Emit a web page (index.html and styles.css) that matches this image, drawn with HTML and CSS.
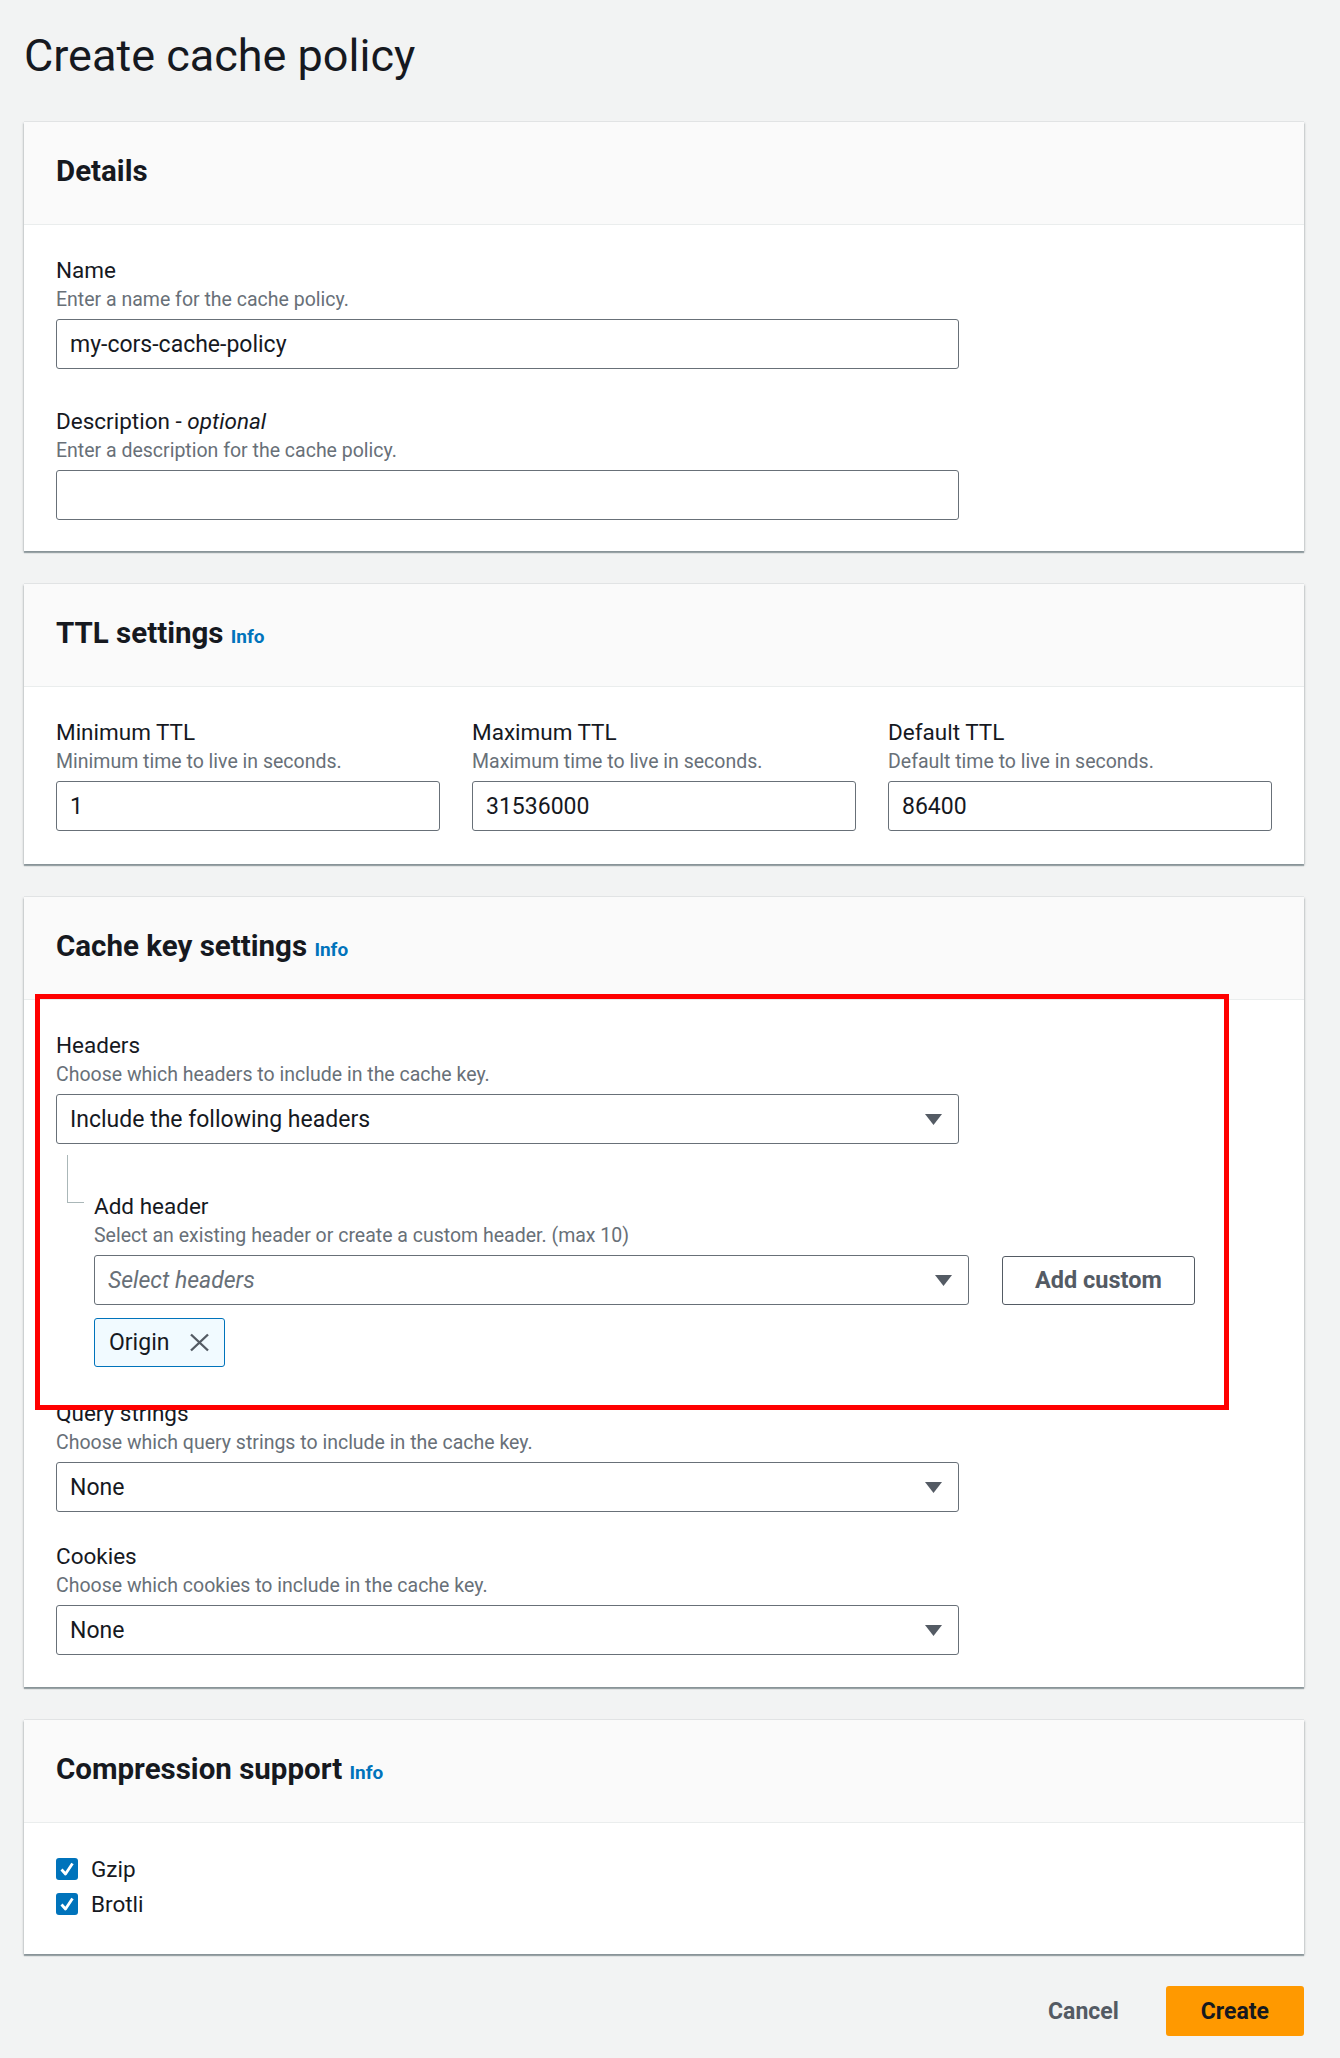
FILE: index.html
```html
<!DOCTYPE html>
<html lang="en">
<head>
<meta charset="utf-8">
<title>Create cache policy</title>
<link rel="stylesheet" href="styles.css">
</head>
<body>
<div class="page">
  <h1 class="title">Create cache policy</h1>

  <section class="card">
    <header class="card-header"><h2>Details</h2></header>
    <div class="card-body details-body">
      <div class="field">
        <div class="label">Name</div>
        <div class="desc">Enter a name for the cache policy.</div>
        <div class="control wide">my-cors-cache-policy</div>
      </div>
      <div class="field gap36">
        <div class="label">Description - <em>optional</em></div>
        <div class="desc">Enter a description for the cache policy.</div>
        <div class="control wide"></div>
      </div>
    </div>
  </section>

  <section class="card">
    <header class="card-header"><h2>TTL settings <a class="info">Info</a></h2></header>
    <div class="card-body ttl-body">
      <div class="ttl-grid">
        <div class="field">
          <div class="label">Minimum TTL</div>
          <div class="desc">Minimum time to live in seconds.</div>
          <div class="control">1</div>
        </div>
        <div class="field">
          <div class="label">Maximum TTL</div>
          <div class="desc">Maximum time to live in seconds.</div>
          <div class="control">31536000</div>
        </div>
        <div class="field">
          <div class="label">Default TTL</div>
          <div class="desc">Default time to live in seconds.</div>
          <div class="control">86400</div>
        </div>
      </div>
    </div>
  </section>

  <section class="card cache-card">
    <header class="card-header"><h2>Cache key settings <a class="info">Info</a></h2></header>
    <div class="card-body cache-body">
      <div class="field">
        <div class="label">Headers</div>
        <div class="desc">Choose which headers to include in the cache key.</div>
        <div class="control select wide">
          <span>Include the following headers</span>
          <svg class="caret" width="17" height="11" viewBox="0 0 17 11"><polygon points="0,0 17,0 8.5,11" fill="#545b64"/></svg>
        </div>
        <div class="subfield">
          <div class="label">Add header</div>
          <div class="desc">Select an existing header or create a custom header. (max 10)</div>
          <div class="select-row">
            <div class="control select headers-select">
              <span class="placeholder">Select headers</span>
              <svg class="caret" width="17" height="11" viewBox="0 0 17 11"><polygon points="0,0 17,0 8.5,11" fill="#545b64"/></svg>
            </div>
            <button class="btn-normal">Add custom</button>
          </div>
          <div class="token">
            <span>Origin</span>
            <svg width="21" height="19" viewBox="0 0 21 19"><path d="M2 1.5 L19 17.5 M19 1.5 L2 17.5" stroke="#545b64" stroke-width="2.4" fill="none"/></svg>
          </div>
        </div>
      </div>
      <div class="field gap30">
        <div class="label">Query strings</div>
        <div class="desc">Choose which query strings to include in the cache key.</div>
        <div class="control select wide">
          <span>None</span>
          <svg class="caret" width="17" height="11" viewBox="0 0 17 11"><polygon points="0,0 17,0 8.5,11" fill="#545b64"/></svg>
        </div>
      </div>
      <div class="field gap28">
        <div class="label">Cookies</div>
        <div class="desc">Choose which cookies to include in the cache key.</div>
        <div class="control select wide">
          <span>None</span>
          <svg class="caret" width="17" height="11" viewBox="0 0 17 11"><polygon points="0,0 17,0 8.5,11" fill="#545b64"/></svg>
        </div>
      </div>
    </div>
    <div class="highlight"></div>
  </section>

  <section class="card">
    <header class="card-header"><h2>Compression support <a class="info">Info</a></h2></header>
    <div class="card-body comp-body">
      <div class="check">
        <svg width="22" height="22" viewBox="0 0 22 22"><rect x="0" y="0" width="22" height="22" rx="3" fill="#0073bb"/><polyline points="5.5,11.5 9.5,16 16.5,5.5" stroke="#fff" stroke-width="2.8" fill="none" stroke-linejoin="round"/></svg>
        <span>Gzip</span>
      </div>
      <div class="check">
        <svg width="22" height="22" viewBox="0 0 22 22"><rect x="0" y="0" width="22" height="22" rx="3" fill="#0073bb"/><polyline points="5.5,11.5 9.5,16 16.5,5.5" stroke="#fff" stroke-width="2.8" fill="none" stroke-linejoin="round"/></svg>
        <span>Brotli</span>
      </div>
    </div>
  </section>

  <div class="actions">
    <button class="btn btn-link">Cancel</button>
    <button class="btn btn-primary">Create</button>
  </div>
</div>
</body>
</html>
```

FILE: styles.css
```css
html, body {
  margin: 0;
  padding: 0;
  background: #f2f3f3;
}
body {
  font-family: Roboto, "Liberation Sans", Arial, sans-serif;
  color: #16191f;
}
.page {
  width: 1280px;
  padding: 28px 36px 0 24px;
}
.title {
  margin: 0 0 38px;
  font-size: 45px;
  font-weight: 400;
  line-height: 56px;
}
.card {
  background: #fff;
  margin-bottom: 33px;
  box-shadow: 0 2px 1px 0 rgba(0, 28, 36, 0.3),
              1px 1px 2px 0 rgba(0, 28, 36, 0.15),
              -1px 1px 2px 0 rgba(0, 28, 36, 0.15),
              0 -1px 0 0 rgba(0, 28, 36, 0.05);
}
.card-header {
  background: #fafafa;
  border-bottom: 1px solid #eaeded;
  padding: 32px 32px 35px;
}
.card-header h2 {
  margin: 0;
  font-size: 29.5px;
  line-height: 35px;
  font-weight: 700;
}
.info {
  font-size: 19px;
  line-height: 1;
  font-weight: 700;
  color: #0073bb;
  text-decoration: none;
}
.card-body {
  padding: 29px 32px 31px;
}
.ttl-body { padding-bottom: 33px; }
.cache-body { padding-bottom: 32px; }
.comp-body { padding: 28px 32px 33px; }

.label {
  font-size: 22.5px;
  line-height: 32px;
}
.label em { font-style: italic; }
.desc {
  font-size: 19.5px;
  line-height: 28px;
  color: #687078;
}
.gap36 { margin-top: 36px; }
.gap30 { margin-top: 30px; }
.gap28 { margin-top: 28px; }

.control {
  margin-top: 5px;
  height: 50px;
  box-sizing: border-box;
  border: 1px solid #687078;
  border-radius: 3px;
  padding: 0 16px 0 13px;
  display: flex;
  align-items: center;
  justify-content: space-between;
  font-size: 23px;
  background: #fff;
  color: #16191f;
}
.wide { width: 903px; }
.ttl-grid {
  display: grid;
  grid-template-columns: repeat(3, 1fr);
  column-gap: 32px;
}
.placeholder {
  font-style: italic;
  color: #687078;
}
.caret { flex: none; }

.subfield {
  position: relative;
  margin-top: 46px;
  padding-left: 38px;
}
.subfield::before {
  content: "";
  position: absolute;
  left: 10.5px;
  top: -35px;
  width: 16px;
  height: 47px;
  border-left: 1px solid #aab7b8;
  border-bottom: 1px solid #aab7b8;
}
.select-row {
  display: flex;
  align-items: center;
  gap: 33px;
  margin-top: 5px;
}
.select-row .control { margin-top: 0; }
.headers-select { width: 875px; }
.btn-normal {
  height: 49px;
  box-sizing: border-box;
  padding: 0 32px;
  border: 1px solid #545b64;
  border-radius: 3px;
  background: #fff;
  color: #545b64;
  font-family: inherit;
  font-size: 23.5px;
  font-weight: 700;
}
.token {
  margin-top: 13px;
  display: inline-flex;
  align-items: center;
  gap: 20px;
  height: 49px;
  box-sizing: border-box;
  padding: 0 14px;
  border: 1px solid #0073bb;
  border-radius: 3px;
  background: #f1faff;
  font-size: 23px;
}
.cache-card { position: relative; }
.highlight {
  position: absolute;
  left: 11px;
  top: 97px;
  width: 1194px;
  height: 416px;
  box-sizing: border-box;
  border: 5px solid #ff0000;
  pointer-events: none;
}

.check {
  display: flex;
  align-items: center;
  gap: 13px;
  height: 35px;
  font-size: 22.5px;
}
.check svg { flex: none; }

.actions {
  display: flex;
  justify-content: flex-end;
  gap: 12px;
  margin-top: -1px;
}
.btn {
  height: 50px;
  box-sizing: border-box;
  padding: 0 33px;
  border: 2px solid transparent;
  border-radius: 3px;
  font-family: inherit;
  font-size: 23px;
  font-weight: 700;
  display: inline-flex;
  align-items: center;
}
.btn-link {
  background: transparent;
  color: #545b64;
}
.btn-primary {
  background: #ff9900;
  border-color: #ff9900;
  color: #16191f;
}
```
